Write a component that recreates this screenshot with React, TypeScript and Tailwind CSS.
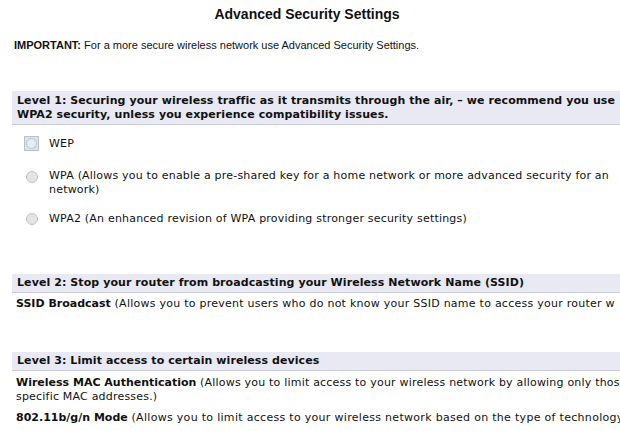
import React from 'react'

const Radio = ({ focused }: { focused?: boolean }) =>
  focused ? (
    <span className="flex h-[15px] w-[15px] shrink-0 items-center justify-center border border-[#b3c0d6] bg-[#dde3ee]">
      <span className="h-[11px] w-[11px] rounded-full border border-[#bcc2cc] bg-[#e8ebf1]" />
    </span>
  ) : (
    <span className="flex h-[15px] w-[15px] shrink-0 items-center justify-center">
      <span className="h-[12px] w-[12px] rounded-full border border-[#bfc3c8] bg-[#e2e4e7]" />
    </span>
  )

const Band = ({ children, className = '' }: { children: React.ReactNode; className?: string }) => (
  <div
    className={`ml-[12px] w-[640px] border-b border-[#c9ccd6] bg-[#e8e9f2] pl-[5px] font-bold tracking-[0.08px] whitespace-nowrap ${className}`}
  >
    {children}
  </div>
)

export default function App() {
  return (
    <div className="h-[431px] w-[620px] overflow-hidden bg-white font-['DejaVu_Sans','Verdana',sans-serif] text-[11px] leading-[14px] text-[#111]">
      <h1 className="pt-[5px] pr-[6px] text-center font-['Liberation_Sans','Arial',sans-serif] text-[14px] leading-[18px] font-bold">
        Advanced Security Settings
      </h1>
      <p className="mt-[15px] pl-[14px] font-['Liberation_Sans','Arial',sans-serif] whitespace-nowrap">
        <b>IMPORTANT:</b> For a more secure wireless network use Advanced Security Settings.
      </p>

      <Band className="mt-[39px] pt-[3px] pb-[2px]">
        Level 1: Securing your wireless traffic as it transmits through the air, – we recommend you use
        <br />
        WPA2 security, unless you experience compatibility issues.
      </Band>

      <div className="pl-[24px] tracking-[0.2px] whitespace-nowrap">
        <div className="mt-[11px] flex items-center gap-[10px]">
          <Radio focused />
          <span>WEP</span>
        </div>
        <div className="mt-[18px] flex items-start gap-[10px]">
          <Radio />
          <span>
            WPA (Allows you to enable a pre-shared key for a home network or more advanced security for an
            <br />
            network)
          </span>
        </div>
        <div className="mt-[14px] flex items-center gap-[10px]">
          <Radio />
          <span>WPA2 (An enhanced revision of WPA providing stronger security settings)</span>
        </div>
      </div>

      <Band className="mt-[48px] py-[2px]">Level 2: Stop your router from broadcasting your Wireless Network Name (SSID)</Band>
      <p className="mt-[4px] pl-[16px] tracking-[0.25px] whitespace-nowrap">
        <b className="tracking-normal">SSID Broadcast</b> (Allows you to prevent users who do not know your SSID name to
        access your router w
      </p>

      <Band className="mt-[41px] py-[2px]">Level 3: Limit access to certain wireless devices</Band>
      <p className="mt-[5px] pl-[16px] tracking-[0.2px] whitespace-nowrap">
        <b className="tracking-normal">Wireless MAC Authentication</b> (Allows you to limit access to your wireless network
        by allowing only those
        <br />
        specific MAC addresses.)
      </p>
      <p className="mt-[7px] pl-[16px] tracking-[0.3px] whitespace-nowrap">
        <b className="tracking-normal">802.11b/g/n Mode</b> (Allows you to limit access to your wireless network based on
        the type of technology
      </p>
    </div>
  )
}
